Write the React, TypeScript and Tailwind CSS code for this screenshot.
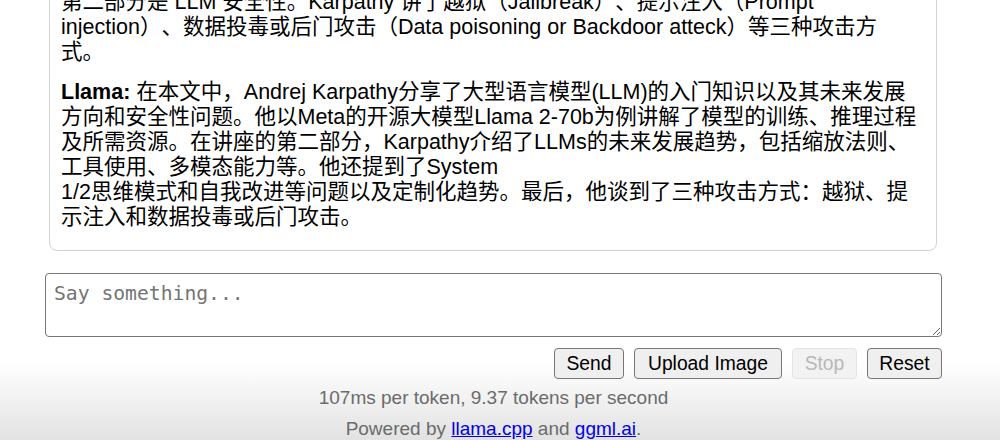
import React from "react";

const sans = '"Liberation Sans", "Noto Sans CJK SC", sans-serif';

export default function App() {
  return (
    <div
      className="w-[1000px] h-[440px] overflow-hidden bg-[linear-gradient(to_bottom,#ffffff_0px,#ffffff_362px,#e2e2e2_440px)]"
      style={{ fontFamily: sans }}
    >
      <div className="ml-[45px] w-[897px] flex flex-col">
        <div className="mt-[-21px] ml-[4px] mr-[5px] border border-[#d3d3d3] rounded-[8px] bg-white pl-[11px] pr-[11px] pt-[10px] pb-[20px] text-[21.5px] leading-[25px] text-black whitespace-nowrap [text-spacing-trim:space-all]">
          <p>
            第二部分是 LLM 安全性。Karpathy 讲了越狱（Jailbreak）、提示注入（Prompt
            <br />
            injection）、数据投毒或后门攻击（Data poisoning or Backdoor atteck）等三种攻击方
            <br />
            式。
          </p>
          <p className="mt-[15px]">
            <b>Llama:</b> 在本文中，Andrej Karpathy分享了大型语言模型(LLM)的入门知识以及其未来发展
            <br />
            方向和安全性问题。他以Meta的开源大模型Llama 2-70b为例讲解了模型的训练、推理过程
            <br />
            及所需资源。在讲座的第二部分，Karpathy介绍了LLMs的未来发展趋势，包括缩放法则、
            <br />
            工具使用、多模态能力等。他还提到了System
            <br />
            1/2思维模式和自我改进等问题以及定制化趋势。最后，他谈到了三种攻击方式：越狱、提
            <br />
            示注入和数据投毒或后门攻击。
          </p>
        </div>

        <textarea
          className="mt-[22px] h-[64px] w-[897px] border border-[#767676] rounded-[4px] bg-white px-[8px] pt-[8px] text-[19.7px] leading-[24px] placeholder:text-[#757575] outline-none"
          style={{ fontFamily: '"DejaVu Sans Mono", monospace' }}
          placeholder="Say something..."
        />

        <div className="mt-[11px] flex justify-end gap-[10px] text-[19.3px]">
          <button className="w-[70px] h-[31px] border border-[#767676] rounded-[4px] bg-[#efefef] text-black leading-none">
            Send
          </button>
          <button className="w-[148px] h-[31px] border border-[#767676] rounded-[4px] bg-[#efefef] text-black leading-none">
            Upload Image
          </button>
          <button
            disabled
            className="w-[65px] h-[31px] border border-[#e4e4e4] rounded-[4px] bg-[#f2f2f2] text-[#b8b8b8] leading-none"
          >
            Stop
          </button>
          <button className="w-[75px] h-[31px] border border-[#767676] rounded-[4px] bg-[#efefef] text-black leading-none">
            Reset
          </button>
        </div>

        <div className="mt-[3px] text-center text-[19px] text-[#6b6b6b]">
          <div className="h-[31px] leading-[31px]">107ms per token, 9.37 tokens per second</div>
          <div className="h-[31px] leading-[31px]">
            Powered by{" "}
            <a href="#" className="text-[#0000ee] underline">
              llama.cpp
            </a>{" "}
            and{" "}
            <a href="#" className="text-[#0000ee] underline">
              ggml.ai
            </a>
            .
          </div>
        </div>
      </div>
    </div>
  );
}
